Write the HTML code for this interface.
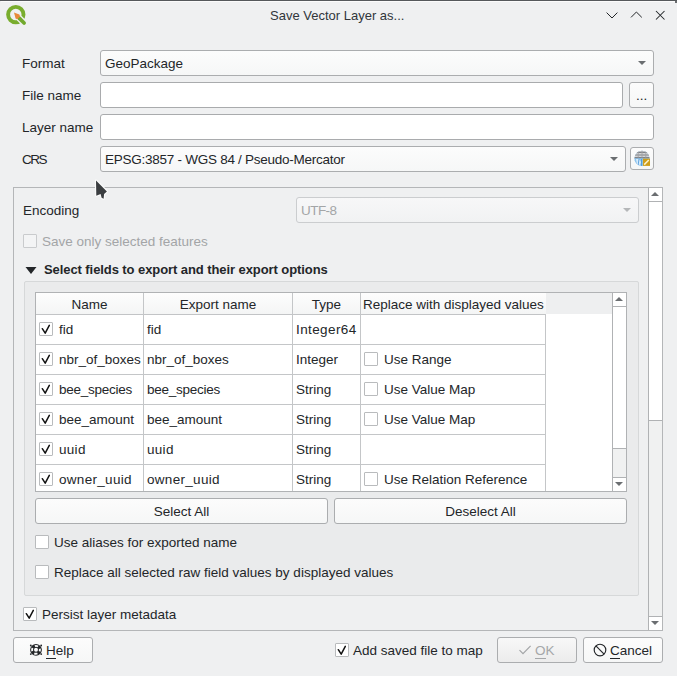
<!DOCTYPE html>
<html><head><meta charset="utf-8">
<style>
*{box-sizing:border-box;margin:0;padding:0}
html,body{width:677px;height:676px;overflow:hidden;background:#eff0f1}
body{position:relative;font-family:"Liberation Sans",sans-serif;font-size:13.5px;color:#232629}
.a{position:absolute}
.t{position:absolute;white-space:nowrap;line-height:15px}
.box{position:absolute;border:1px solid #a9abad;border-radius:3px;background:#ffffff}
.btn{position:absolute;border:1px solid #abadaf;border-radius:3px;background:linear-gradient(#fcfcfc,#f6f7f7)}
.cb{position:absolute;width:14px;height:14px;border:1px solid #b9bbbd;border-radius:1px;background:#ffffff}
.cb svg{position:absolute;left:0;top:0}
.vl{position:absolute;width:1px;background:#c4c6c8}
.hl{position:absolute;height:1px;background:#c4c6c8}
.arr{position:absolute;width:0;height:0;border-left:4px solid transparent;border-right:4px solid transparent;border-top:4px solid #6b6e71}
.up{position:absolute;width:0;height:0;border-left:5px solid transparent;border-right:5px solid transparent;border-bottom:5px solid #6b6e71}
.dn{position:absolute;width:0;height:0;border-left:4px solid transparent;border-right:4px solid transparent;border-top:4px solid #6b6e71}
</style></head><body>
<!-- top strip -->
<div class="a" style="left:0;top:0;width:677px;height:1px;background:#55585b"></div>
<div class="a" style="left:1px;top:1px;width:674px;height:1px;background:#fbfbfb"></div>
<div class="a" style="left:675px;top:1px;width:2px;height:2px;background:#6a6d70"></div>

<!-- QGIS logo -->
<svg class="a" style="left:4px;top:4px" width="24" height="24" viewBox="0 0 24 24">
  <circle cx="11.8" cy="10.6" r="7.7" fill="none" stroke="#79ad2e" stroke-width="3.9"/>
  <path d="M14.6 13.5 L21 19.9" stroke="#eff0f1" stroke-width="6.5" stroke-linecap="round"/>
  <path d="M15.2 14.1 L20.1 19" stroke="#72a92d" stroke-width="3.7" stroke-linecap="round"/>
  <path d="M10 8.6 L15.3 10.6 L16.2 12.4 L13.2 15.2 L11.6 14.4 Z" fill="#e8893a"/>
</svg>

<div class="t" style="left:270px;top:8px;color:#31363b;font-size:13px">Save Vector Layer as...</div>
<!-- window controls -->
<svg class="a" style="left:600px;top:4px" width="77" height="22" viewBox="0 0 77 22">
  <path d="M6.6 8.6 L12 14 L17.4 8.6" fill="none" stroke="#232629" stroke-width="1"/>
  <path d="M31 13.4 L36.4 8 L41.8 13.4" fill="none" stroke="#232629" stroke-width="1"/>
  <path d="M56 7 L64.5 15.5 M64.5 7 L56 15.5" fill="none" stroke="#232629" stroke-width="1.05"/>
</svg>

<!-- form labels -->
<div class="t" style="left:22px;top:56px">Format</div>
<div class="t" style="left:22px;top:88px">File name</div>
<div class="t" style="left:22px;top:120px">Layer name</div>
<div class="t" style="left:22px;top:152px;letter-spacing:-1.5px">CRS</div>

<div class="btn" style="left:100px;top:50px;width:554px;height:26px"></div>
<div class="t" style="left:105px;top:56px">GeoPackage</div>
<div class="arr" style="left:638px;top:61px"></div>

<div class="box" style="left:100px;top:82px;width:523px;height:26px"></div>
<div class="btn" style="left:629px;top:82px;width:25px;height:26px"></div>
<div class="t" style="left:636px;top:88px">...</div>

<div class="box" style="left:100px;top:114px;width:554px;height:26px"></div>

<div class="btn" style="left:100px;top:146px;width:526px;height:26px"></div>
<div class="t" style="left:105px;top:152px;letter-spacing:-0.26px">EPSG:3857 - WGS 84 / Pseudo-Mercator</div>
<div class="arr" style="left:610px;top:157px"></div>
<div class="btn" style="left:630px;top:147px;width:24px;height:23px"></div>
<svg class="a" style="left:633px;top:150px" width="18" height="18" viewBox="0 0 18 18">
  <defs><clipPath id="gc"><circle cx="9" cy="8.4" r="7.6"/></clipPath></defs>
  <g clip-path="url(#gc)">
    <rect x="0" y="0" width="18" height="18" fill="#8ec5ef"/>
    <path d="M3 9 L6 9 L8 12 L7 15 L4 14 Z" fill="#d6ecfb"/>
    <path d="M1 10 L4 16 M6 9 L5 16 M8.5 9 L8.5 16" stroke="#4d97d8" stroke-width="1" opacity="0.85"/>
    <path d="M0 7.6 L18 7.6 L18 0 L0 0 Z" fill="#d3d5d7"/>
    <path d="M0 2.4 H18 M0 5 H18 M0 7.6 H18" stroke="#808387" stroke-width="1.1"/>
    <path d="M5.2 0 V7.6 M9 0 V7.6 M12.8 0 V7.6" stroke="#a0a3a6" stroke-width="0.9"/>
  </g>
  <rect x="9.9" y="8.6" width="7.1" height="7.3" fill="#cf9e1a"/>
  <path d="M11.2 14.6 L15.8 10" stroke="#fbf3d0" stroke-width="1.5"/>
</svg>

<!-- scroll area -->
<div class="a" style="left:13px;top:187px;width:650px;height:444px;border:1px solid #b4b6b8"></div>
<!-- scroll content -->
<div class="t" style="left:23px;top:203px">Encoding</div>
<div class="btn" style="left:296px;top:197px;width:343px;height:26px;border-color:#cbcdcf;background:linear-gradient(#f7f7f8,#f1f2f3)"></div>
<div class="t" style="left:301px;top:203px;color:#a3a5a7;letter-spacing:-0.55px">UTF-8</div>
<div class="arr" style="left:623px;top:208px;border-top-color:#b5b7b9"></div>
<div class="cb" style="left:23px;top:234px;border-color:#c9cbcd;background:#f3f4f5"></div>
<div class="t" style="left:42px;top:234px;color:#a3a5a7">Save only selected features</div>
<svg class="a" style="left:25px;top:266px" width="12" height="9" viewBox="0 0 12 9"><path d="M0.5 1 L11.5 1 L6 8 Z" fill="#232629"/></svg>
<div class="t" style="left:44px;top:262px;font-weight:bold;font-size:13px;letter-spacing:-0.08px">Select fields to export and their export options</div>
<div class="a" style="left:24px;top:281px;width:615px;height:315px;border:1px solid #d6d8d9;border-radius:2px;background:#eaebec"></div>
<div class="a" style="left:35px;top:292px;width:592px;height:200px;border:1px solid #b0b2b4;background:#ffffff"></div>
<div class="a" style="left:36px;top:293px;width:576px;height:21px;background:#eeeff0"></div>
<div class="a" style="left:36px;top:293px;width:510px;height:21px;background:linear-gradient(#fdfdfd,#f4f5f5)"></div>
<div class="hl" style="left:36px;top:314px;width:509px;background:#c2c4c6"></div>
<div class="vl" style="left:143px;top:293px;height:198px"></div>
<div class="vl" style="left:292px;top:293px;height:198px"></div>
<div class="vl" style="left:360px;top:293px;height:198px"></div>
<div class="vl" style="left:545px;top:314px;height:177px"></div>
<div class="t" style="left:36px;top:297px;width:107px;text-align:center">Name</div>
<div class="t" style="left:144px;top:297px;width:148px;text-align:center">Export name</div>
<div class="t" style="left:293px;top:297px;width:67px;text-align:center">Type</div>
<div class="t" style="left:363px;top:297px">Replace with displayed values</div>
<div class="hl" style="left:36px;top:344px;width:509px"></div>
<div class="cb" style="left:39px;top:322px"><svg width="14" height="14" viewBox="0 0 14 14"><path d="M2.3 5.7 L5.2 10.1 L9.3 2.4" fill="none" stroke="#111" stroke-width="1.5" stroke-linecap="round" stroke-linejoin="round"/></svg></div>
<div class="t" style="left:59px;top:322px">fid</div>
<div class="t" style="left:147px;top:322px">fid</div>
<div class="t" style="left:296px;top:322px;letter-spacing:0.4px">Integer64</div>
<div class="hl" style="left:36px;top:374px;width:509px"></div>
<div class="cb" style="left:39px;top:352px"><svg width="14" height="14" viewBox="0 0 14 14"><path d="M2.3 5.7 L5.2 10.1 L9.3 2.4" fill="none" stroke="#111" stroke-width="1.5" stroke-linecap="round" stroke-linejoin="round"/></svg></div>
<div class="t" style="left:59px;top:352px">nbr_of_boxes</div>
<div class="t" style="left:147px;top:352px">nbr_of_boxes</div>
<div class="t" style="left:296px;top:352px">Integer</div>
<div class="cb" style="left:364px;top:352px"></div>
<div class="t" style="left:384px;top:352px">Use Range</div>
<div class="hl" style="left:36px;top:404px;width:509px"></div>
<div class="cb" style="left:39px;top:382px"><svg width="14" height="14" viewBox="0 0 14 14"><path d="M2.3 5.7 L5.2 10.1 L9.3 2.4" fill="none" stroke="#111" stroke-width="1.5" stroke-linecap="round" stroke-linejoin="round"/></svg></div>
<div class="t" style="left:59px;top:382px;letter-spacing:-0.25px">bee_species</div>
<div class="t" style="left:147px;top:382px;letter-spacing:-0.25px">bee_species</div>
<div class="t" style="left:296px;top:382px">String</div>
<div class="cb" style="left:364px;top:382px"></div>
<div class="t" style="left:384px;top:382px">Use Value Map</div>
<div class="hl" style="left:36px;top:434px;width:509px"></div>
<div class="cb" style="left:39px;top:412px"><svg width="14" height="14" viewBox="0 0 14 14"><path d="M2.3 5.7 L5.2 10.1 L9.3 2.4" fill="none" stroke="#111" stroke-width="1.5" stroke-linecap="round" stroke-linejoin="round"/></svg></div>
<div class="t" style="left:59px;top:412px">bee_amount</div>
<div class="t" style="left:147px;top:412px">bee_amount</div>
<div class="t" style="left:296px;top:412px">String</div>
<div class="cb" style="left:364px;top:412px"></div>
<div class="t" style="left:384px;top:412px">Use Value Map</div>
<div class="hl" style="left:36px;top:464px;width:509px"></div>
<div class="cb" style="left:39px;top:442px"><svg width="14" height="14" viewBox="0 0 14 14"><path d="M2.3 5.7 L5.2 10.1 L9.3 2.4" fill="none" stroke="#111" stroke-width="1.5" stroke-linecap="round" stroke-linejoin="round"/></svg></div>
<div class="t" style="left:59px;top:442px;letter-spacing:0.3px">uuid</div>
<div class="t" style="left:147px;top:442px;letter-spacing:0.3px">uuid</div>
<div class="t" style="left:296px;top:442px">String</div>
<div class="cb" style="left:39px;top:472px"><svg width="14" height="14" viewBox="0 0 14 14"><path d="M2.3 5.7 L5.2 10.1 L9.3 2.4" fill="none" stroke="#111" stroke-width="1.5" stroke-linecap="round" stroke-linejoin="round"/></svg></div>
<div class="t" style="left:59px;top:472px;letter-spacing:0.3px">owner_uuid</div>
<div class="t" style="left:147px;top:472px;letter-spacing:0.3px">owner_uuid</div>
<div class="t" style="left:296px;top:472px">String</div>
<div class="cb" style="left:364px;top:472px"></div>
<div class="t" style="left:384px;top:472px">Use Relation Reference</div>
<div class="a" style="left:612px;top:293px;width:14px;height:198px;background:#ffffff;border-left:1px solid #b0b2b4"></div>
<div class="hl" style="left:613px;top:306px;width:13px;background:#b0b2b4"></div>
<div class="up" style="left:615px;top:297px;border-left-width:4px;border-right-width:4px;border-bottom-width:4px"></div>
<div class="a" style="left:613px;top:448px;width:13px;height:30px;background:#f0f1f1;border-top:1px solid #b0b2b4;border-bottom:1px solid #b0b2b4"></div>
<div class="dn" style="left:615px;top:482px"></div>
<div class="btn" style="left:35px;top:498px;width:293px;height:26px"></div>
<div class="t" style="left:35px;top:504px;width:293px;text-align:center">Select All</div>
<div class="btn" style="left:334px;top:498px;width:293px;height:26px"></div>
<div class="t" style="left:334px;top:504px;width:293px;text-align:center">Deselect All</div>
<div class="cb" style="left:35px;top:535px"></div>
<div class="t" style="left:54px;top:535px">Use aliases for exported name</div>
<div class="cb" style="left:35px;top:565px"></div>
<div class="t" style="left:54px;top:565px">Replace all selected raw field values by displayed values</div>
<div class="cb" style="left:23px;top:607px"><svg width="14" height="14" viewBox="0 0 14 14"><path d="M2.3 5.7 L5.2 10.1 L9.3 2.4" fill="none" stroke="#111" stroke-width="1.5" stroke-linecap="round" stroke-linejoin="round"/></svg></div>
<div class="t" style="left:42px;top:607px">Persist layer metadata</div>
<div class="a" style="left:648px;top:188px;width:14px;height:442px;background:#ffffff;border-left:1px solid #b0b2b4"></div>
<div class="hl" style="left:649px;top:201px;width:13px;background:#b0b2b4"></div>
<div class="up" style="left:651px;top:192px;border-left-width:4px;border-right-width:4px;border-bottom-width:4px"></div>
<div class="a" style="left:649px;top:420px;width:13px;height:197px;background:#f0f1f1;border-top:1px solid #b0b2b4;border-bottom:1px solid #b0b2b4"></div>
<div class="dn" style="left:651px;top:621px"></div>

<!-- bottom buttons -->
<div class="btn" style="left:13px;top:637px;width:80px;height:26px"></div>
<svg class="a" style="left:29px;top:643px" width="14" height="14" viewBox="0 0 14 14">
  <circle cx="7" cy="6.8" r="5.9" fill="#232629"/>
  <circle cx="7" cy="6.8" r="3.9" fill="none" stroke="#fcfcfc" stroke-width="1.9" stroke-dasharray="3.3 2.826" stroke-dashoffset="1.65"/>
  <circle cx="7" cy="6.8" r="2" fill="#fcfcfc"/>
  <circle cx="1.8" cy="2.5" r="0.9" fill="#232629"/><circle cx="12.2" cy="2.5" r="0.9" fill="#232629"/>
  <circle cx="1.8" cy="11.1" r="0.9" fill="#232629"/><circle cx="12.2" cy="11.1" r="0.9" fill="#232629"/>
</svg>
<div class="t" style="left:46px;top:643px"><u style="text-decoration:none;border-bottom:1px solid #232629;display:inline-block;line-height:14px">H</u>elp</div>
<div class="cb" style="left:335px;top:643px"><svg width="14" height="14" viewBox="0 0 14 14"><path d="M2.3 5.7 L5.2 10.1 L9.3 2.4" fill="none" stroke="#111" stroke-width="1.5" stroke-linecap="round" stroke-linejoin="round"/></svg></div>
<div class="t" style="left:353px;top:643px">Add saved file to map</div>
<div class="btn" style="left:497px;top:637px;width:80px;height:26px;background:linear-gradient(#f8f8f8,#ececec)"></div>
<svg class="a" style="left:518px;top:644px" width="14" height="12" viewBox="0 0 14 12">
  <path d="M1.5 6.2 L5 9.7 L12.6 1.8" fill="none" stroke="#a3a5a7" stroke-width="1.2"/>
</svg>
<div class="t" style="left:535px;top:643px;color:#a5a7a9"><u style="text-decoration:none;border-bottom:1px solid #a5a7a9;display:inline-block;line-height:14px">O</u>K</div>
<div class="btn" style="left:583px;top:637px;width:80px;height:26px"></div>
<svg class="a" style="left:593px;top:643px" width="14" height="14" viewBox="0 0 14 14">
  <circle cx="7" cy="7" r="5.8" fill="none" stroke="#232629" stroke-width="1.15"/>
  <path d="M2.9 2.9 L11.1 11.1" stroke="#232629" stroke-width="1.15"/>
</svg>
<div class="t" style="left:610px;top:643px"><u style="text-decoration:none;border-bottom:1px solid #232629;display:inline-block;line-height:14px">C</u>ancel</div>
<svg class="a" style="left:93px;top:177px" width="18" height="25" viewBox="0 0 18 25">
  <path d="M3 3.5 L13.9 14.4 L11.1 17.1 L10.6 21.7 L8.6 20.7 L7.6 17.1 L3.3 18.7 Z" fill="#3b3e41" stroke="#fcfcfc" stroke-width="2.2" stroke-linejoin="round" paint-order="stroke"/>
</svg>
</body></html>
